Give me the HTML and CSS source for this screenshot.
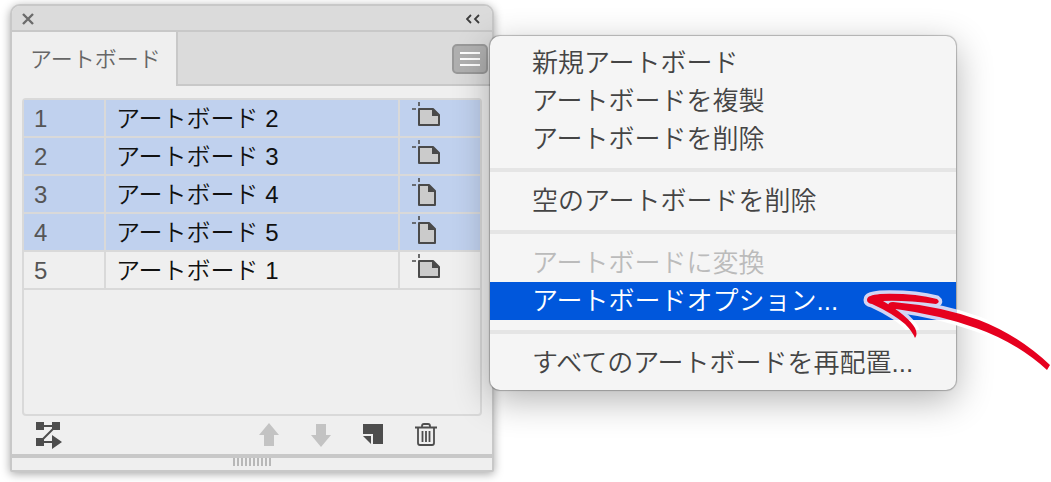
FILE: index.html
```html
<!DOCTYPE html>
<html lang="ja">
  <head>
    <meta charset="UTF-8" />
    <meta name="viewport" content="width=device-width, initial-scale=1.0" />
    <title>アートボード</title>
    <link rel="stylesheet" href="styles.css">
  </head>
  <body>
    <svg class="sprite" aria-hidden="true">
      <symbol id="landscape" viewBox="0 0 28 28">
        <path d="M0 7h4M7 0v4" stroke="#4a4a4a" stroke-width="1.6" fill="none" />
        <path d="M7 7h14l6 6v10H7z" fill="#cbcbcb" stroke="#4a4a4a" stroke-width="2" stroke-linejoin="round" />
        <path d="M20 7v7h7l-6-7z" fill="#4a4a4a" />
      </symbol>
      <symbol id="portrait" viewBox="0 0 28 28">
        <path d="M0 7h4M7 0v4" stroke="#4a4a4a" stroke-width="1.6" fill="none" />
        <path d="M7 7h10l6 6v14H7z" fill="#cbcbcb" stroke="#4a4a4a" stroke-width="2" stroke-linejoin="round" />
        <path d="M16 7v7h7l-6-7z" fill="#4a4a4a" />
      </symbol>
    </svg>

    <div class="stage">
      <section class="panel">
        <header class="titlebar">
          <button class="close" aria-label="閉じる">
            <svg width="12" height="12" viewBox="0 0 12 12"><path d="M1 1l10 10M11 1L1 11" stroke="#6b6b6b" stroke-width="2.4" /></svg>
          </button>
          <button class="collapse" aria-label="折りたたむ">
            <svg width="14" height="10" viewBox="0 0 14 10"><path d="M5 1L1 5l4 4M13 1L9 5l4 4" stroke="#3c3c3c" stroke-width="1.8" fill="none" /></svg>
          </button>
        </header>

        <div class="tabs">
          <h1 class="tab">アートボード</h1>
          <div class="tab_rest">
            <button class="menu_button" aria-label="メニュー">
              <svg width="20" height="16" viewBox="0 0 20 16"><path d="M0 2h20M0 8h20M0 14h20" stroke="#fff" stroke-width="2" /></svg>
            </button>
          </div>
        </div>

        <div class="list">
          <table>
            <tbody>
              <tr class="selected">
                <td class="number">1</td>
                <td class="name">アートボード 2</td>
                <td class="type"><svg><use href="#landscape" /></svg></td>
              </tr>
              <tr class="selected">
                <td class="number">2</td>
                <td class="name">アートボード 3</td>
                <td class="type"><svg><use href="#landscape" /></svg></td>
              </tr>
              <tr class="selected">
                <td class="number">3</td>
                <td class="name">アートボード 4</td>
                <td class="type"><svg><use href="#portrait" /></svg></td>
              </tr>
              <tr class="selected">
                <td class="number">4</td>
                <td class="name">アートボード 5</td>
                <td class="type"><svg><use href="#portrait" /></svg></td>
              </tr>
              <tr>
                <td class="number">5</td>
                <td class="name">アートボード 1</td>
                <td class="type"><svg><use href="#landscape" /></svg></td>
              </tr>
            </tbody>
          </table>
        </div>

        <footer class="tools">
          <button class="rearrange" aria-label="再配置">
            <svg width="28" height="28" viewBox="0 0 28 28">
              <path d="M4 5h16L4 21h14" fill="none" stroke="#4d4d4d" stroke-width="2" />
              <path d="M0 1h8v8H0zM16 1h8v8h-8zM0 17h8v8H0zM16 14l10 7-10 7z" fill="#4d4d4d" />
            </svg>
          </button>
          <button aria-label="上へ" disabled>
            <svg width="20" height="24" viewBox="0 0 20 24"><path d="M10 0l10 12h-5v11H5V12H0z" fill="#c3c3c3" /></svg>
          </button>
          <button aria-label="下へ" disabled>
            <svg width="20" height="24" viewBox="0 0 20 24"><path d="M10 24l10-12h-5V1H5v11H0z" fill="#c3c3c3" /></svg>
          </button>
          <button aria-label="新規アートボード">
            <svg width="20" height="24" viewBox="0 0 20 24"><path d="M0 1h20v20h-10V11H0zM0 13h8v8z" fill="#4d4d4d" /></svg>
          </button>
          <button aria-label="削除">
            <svg width="22" height="24" viewBox="0 0 22 24">
              <path d="M0 4.500h22M7 4V3q0-2 2-2h4q2 0 2 2v1M3 5v15q0 2 2 2h12q2 0 2-2V5M7.500 8v11M11 8v11M14.500 8v11" fill="none" stroke="#4d4d4d" stroke-width="1.800" />
            </svg>
          </button>
        </footer>
        <div class="grip"><span></span></div>
      </section>

      <menu class="popup">
        <li><button>新規アートボード</button></li>
        <li><button>アートボードを複製</button></li>
        <li><button>アートボードを削除</button></li>
        <li class="separator"></li>
        <li><button>空のアートボードを削除</button></li>
        <li class="separator"></li>
        <li><button disabled>アートボードに変換</button></li>
        <li class="current">
          <button>アートボードオプション...</button>
          <svg class="arrow" width="190" height="90" viewBox="0 0 190 90" aria-hidden="true">
            <defs>
              <g id="strokes">
                <path d="M7 18C7 14 12 13 20 12Q54 11 77 17Q81 20 76 22Q44 18 23 19Q48 34 55 46Q58 52 55 56Q52 49 45 42Q32 31 12 22Q7 21 7 18z" />
                <path d="M28 26Q27 20 33 20Q80 24 119 38Q158 53 190 83L187 88Q156 60 116 46Q80 33 36 27Q34 28 32 30z" />
              </g>
              <clipPath id="bar"><path d="M0 0h97v38H0z" /></clipPath>
              <clipPath id="below"><path d="M0 38h97V0h93v90h-93V48H0z" /></clipPath>
            </defs>
            <g clip-path="url(#bar)"><use href="#strokes" class="halo" /></g>
            <g clip-path="url(#below)"><use href="#strokes" class="halo light" /></g>
            <use href="#strokes" class="ink" />
          </svg>
        </li>
        <li class="separator"></li>
        <li><button>すべてのアートボードを再配置...</button></li>
      </menu>
    </div>
  </body>
</html>
```
FILE: styles.css
```css
* {
  box-sizing: border-box;
  margin: 0;
  padding: 0;
}

body {
  background: white;
  color: #444;
  font-family: "Liberation Sans", "Noto Sans CJK JP", sans-serif;
  font-weight: 350;
}

button {
  border: none;
  background: transparent;
  color: inherit;
  font: inherit;
}

svg {
  display: block;
}

.sprite {
  position: absolute;
  width: 0;
  height: 0;
}

.stage {
  position: relative;
  padding: 4px 10px 10px;
}

.panel {
  width: 46.9%;
  background: #efefef;
  border: 2px solid #c8c8c8;
  border-radius: 10px 10px 2px 2px;
  box-shadow: 0 2px 10px rgba(0, 0, 0, 0.35);
  overflow: hidden;
}

.titlebar {
  display: flex;
  align-items: center;
  justify-content: space-between;
  height: 26px;
  padding: 2px 12px 0 10px;
  background: #dbdbdb;
  border-bottom: 2px solid #c8c8c8;
}

.tabs {
  display: flex;
  height: 54px;

  .tab {
    padding: 0 15px 0 18px;
    line-height: 56px;
    font-size: 22px;
    font-weight: 350;
    color: #666;
  }

  .tab_rest {
    display: flex;
    flex: 1;
    align-items: center;
    justify-content: flex-end;
    padding: 2px 4px 0 0;
    background: #dbdbdb;
    border-left: 2px solid #c8c8c8;
    border-bottom: 2px solid #c8c8c8;
  }

  .menu_button {
    padding: 5px 6px;
    background: #b0b0b0;
    border: 2px solid #999;
    border-radius: 5px;
  }
}

.list {
  min-height: 318px;
  margin: 12px 10px 0;
  border: 2px solid #d9d9d9;
  border-radius: 4px;

  table {
    width: 100%;
    table-layout: fixed;
    border-collapse: separate;
    border-spacing: 0;
  }

  td {
    height: 38px;
    padding-top: 2px;
    border-bottom: 2px solid #d9d9d9;
    line-height: 34px;
    font-size: 24px;
  }

  .selected {
    background: #c0d1ee;
  }

  .number {
    width: 82px;
    padding-left: 10px;
    border-right: 2px solid #d9d9d9;
    color: #555;
  }

  .name {
    padding-left: 10px;
    border-right: 2px solid #d9d9d9;
    color: #111;
  }

  .type {
    width: 80px;
    padding: 0 0 4px 12px;

    svg {
      width: 28px;
      height: 28px;
    }
  }
}

.tools {
  display: flex;
  align-items: center;
  gap: 32px;
  height: 38px;
  padding: 0 55px 0 24px;

  .rearrange {
    margin-right: auto;
  }
}

.grip {
  display: flex;
  justify-content: center;
  height: 16px;
  border-top: 4px solid #c8c8c8;

  span {
    width: 38px;
    height: 8px;
    background: repeating-linear-gradient(to right, #b8b8b8 0 2px, #efefef 2px 4px);
  }
}

/* opens from the menu button, over the panel edge */
.popup {
  position: absolute;
  top: 36px;
  left: 490px;
  padding: 8px 0;
  background: #f5f5f5;
  border-radius: 10px;
  box-shadow: 0 0 1px 1px rgba(0, 0, 0, 0.25), 0 10px 36px rgba(0, 0, 0, 0.3);
  list-style: none;

  li {
    position: relative;
  }

  button {
    display: block;
    width: 100%;
    height: 38px;
    padding: 0 43px 0 42px;
    line-height: 36px;
    font-size: 26px;
    text-align: left;
    white-space: nowrap;

    &:disabled {
      color: #bbb;
    }
  }

  .separator {
    height: 4px;
    margin: 10px 0;
    background: #e5e5e5;
  }

  .current {
    background: #0057dc;
    color: white;
  }
}

.arrow {
  position: absolute;
  top: 0;
  left: 370px;
  z-index: 1;

  .halo {
    fill: #d3d5f3;
    stroke: #d3d5f3;
    stroke-width: 7px;
    stroke-linejoin: round;
  }

  .light {
    fill: white;
    stroke: white;
  }

  .ink {
    fill: #e6001f;
  }
}
```
